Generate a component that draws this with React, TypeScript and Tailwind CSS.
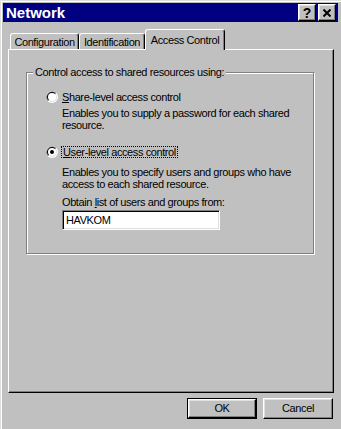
import React from 'react';

const sans = "font-['Liberation_Sans',Arial,sans-serif]";

const raised =
  'border border-t-white border-l-white border-r-black border-b-black shadow-[inset_-1px_-1px_0_#808080,inset_1px_1px_0_#dfdfdf]';

function Radio({ checked }: { checked?: boolean }) {
  return (
    <svg width="12" height="12" viewBox="0 0 12 12" className="shrink-0">
      <circle cx="6" cy="6" r="6" fill="#fff" />
      <path d="M1.76 10.24 A6 6 0 0 1 10.24 1.76 Z" fill="#808080" />
      <circle cx="6" cy="6" r="5" fill="#dfdfdf" />
      <path d="M2.46 9.54 A5 5 0 0 1 9.54 2.46 Z" fill="#000" />
      <circle cx="6" cy="6" r="4" fill="#fff" />
      {checked && <circle cx="6" cy="6" r="2" fill="#000" />}
    </svg>
  );
}

function TitleButton({ children }: { children: React.ReactNode }) {
  return (
    <div className={`w-[18px] h-[17px] bg-[#c0c0c0] flex items-center justify-center ${raised}`}>
      {children}
    </div>
  );
}

function Tab({ label, active, width }: { label: string; active?: boolean; width: string }) {
  if (active) {
    return (
      <div
        className={`relative z-10 ${width} h-[21px] -mb-px bg-[#c0c0c0] rounded-t-[3px] border-t border-l border-r border-t-white border-l-white border-r-black shadow-[inset_-1px_0_0_#808080] flex items-start justify-center pt-[4px] leading-[12px]`}
      >
        {label}
      </div>
    );
  }
  return (
    <div
      className={`${width} h-[16px] bg-[#c0c0c0] rounded-t-[3px] border-t border-l border-r border-t-white border-l-white border-r-black shadow-[inset_-1px_0_0_#808080] flex items-start justify-center pt-[2px] leading-[12px]`}
    >
      {label}
    </div>
  );
}

export default function App() {
  return (
    <div
      className={`w-[341px] h-[429px] bg-[#c0c0c0] border-t border-l border-[#dfdfdf] shadow-[inset_1px_1px_0_#fff] pt-[2px] pl-[2px] pr-[3px] text-black text-[11px] tracking-[-0.4px] ${sans}`}
    >
      {/* title bar */}
      <div className="h-[19px] bg-[#000080] flex items-center justify-between pl-[3px] pr-[2px]">
        <span className="text-white font-bold text-[15px] tracking-normal leading-none">Network</span>
        <div className="flex gap-[2px]">
          <TitleButton>
            <span className="font-bold text-[14px] leading-none tracking-normal">?</span>
          </TitleButton>
          <TitleButton>
            <svg width="8" height="8" viewBox="0 0 8 8">
              <path d="M0.5 0.5 L7.5 7.5 M7.5 0.5 L0.5 7.5" stroke="#000" strokeWidth="2" />
            </svg>
          </TitleButton>
        </div>
      </div>

      {/* tabs */}
      <div className="mt-[7px] ml-[7px] h-[20px] flex items-end">
        <Tab label="Configuration" width="w-[69px]" />
        <Tab label="Identification" width="w-[66px]" />
        <Tab label="Access Control" width="w-[80px]" active />
      </div>

      {/* panel */}
      <div className="ml-[5px] mr-[4px] h-[344px] border border-t-white border-l-white border-r-black border-b-black shadow-[inset_-1px_-1px_0_#808080] pt-[16px]">
        <fieldset className="ml-[17px] w-[288px] border border-[#808080] shadow-[inset_1px_1px_0_#fff,1px_1px_0_#fff] pb-[23px]">
          <legend className="ml-[6px] px-[2px] bg-[#c0c0c0] leading-[12px]">
            Control access to shared resources using:
          </legend>

          <div className="mt-[13px] pl-[19px] flex items-center gap-[4px] h-[12px] leading-[12px]">
            <Radio />
            <span>
              <span className="underline">S</span>hare-level access control
            </span>
          </div>
          <div className="mt-[4px] pl-[35px] leading-[12px]">
            Enables you to supply a password for each shared
            <br />
            resource.
          </div>

          <div className="mt-[15px] pl-[19px] flex items-center gap-[3px] h-[12px]">
            <Radio checked />
            <span className="border border-dotted border-black px-px leading-[10px]">
              <span className="underline">U</span>ser-level access control
            </span>
          </div>
          <div className="mt-[8px] pl-[35px] leading-[12px]">
            Enables you to specify users and groups who have
            <br />
            access to each shared resource.
          </div>

          <div className="mt-[6px] pl-[35px] leading-[12px]">
            Obtain <span className="underline">l</span>ist of users and groups from:
          </div>
          <div className="mt-[2px] ml-[35px] w-[158px] h-[20px] bg-white border border-t-[#808080] border-l-[#808080] border-r-white border-b-white shadow-[inset_1px_1px_0_#000,inset_-1px_-1px_0_#dfdfdf] flex items-center pl-[3px] leading-none">
            HAVKOM
          </div>
        </fieldset>
      </div>

      {/* buttons */}
      <div className="mt-[5px] pr-[5px] flex justify-end gap-[6px]">
        <div className="w-[70px] h-[21px] border border-black">
          <div className={`w-full h-full flex items-center justify-center ${raised}`}>OK</div>
        </div>
        <div className={`w-[70px] h-[21px] flex items-center justify-center ${raised}`}>Cancel</div>
      </div>
    </div>
  );
}
